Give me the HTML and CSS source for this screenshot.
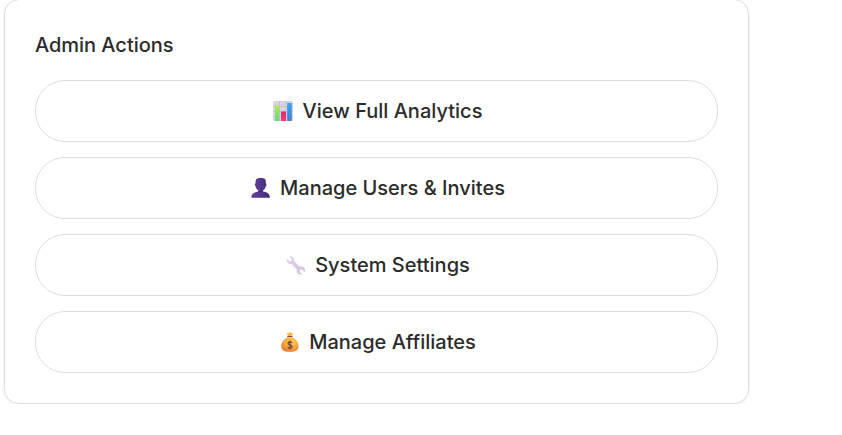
FILE: index.html
```html
<!DOCTYPE html>
<html lang="en">
<head>
<meta charset="utf-8">
<title>Admin Actions</title>
<link rel="stylesheet" href="styles.css">
</head>
<body>
<section class="card">
  <h2 class="card-title">Admin Actions</h2>
  <div class="actions">
    <button class="action" type="button">
      <svg class="icon" viewBox="0 0 20 20" aria-hidden="true">
        <defs>
          <linearGradient id="green" x2="0" y2="1"><stop stop-color="#b5e95b"/><stop offset="1" stop-color="#5bdc7c"/></linearGradient>
          <linearGradient id="pink" x2="0" y2="1"><stop stop-color="#d52b79"/><stop offset="1" stop-color="#fb3c70"/></linearGradient>
          <linearGradient id="blue" x2="0" y2="1"><stop stop-color="#31aaf3"/><stop offset="1" stop-color="#477bd0"/></linearGradient>
        </defs>
        <rect width="20" height="20" rx="1.8" fill="#d9d3e2"/>
        <path d="M0 5.5h20M0 10.5h20M0 15.5h20M6.5 0v20M13 0v20" stroke="#bdb5ca" stroke-width=".7"/>
        <path d="M2 4.2h4.300v15.800H2z" fill="url(#green)"/>
        <path d="M8 10.500h5v9.500H8z" fill="url(#pink)"/>
        <path d="M14.200 2h4.600v18h-4.600z" fill="url(#blue)"/>
      </svg>
      <span>View Full Analytics</span>
    </button>
    <button class="action" type="button">
      <svg class="icon" viewBox="-1 0 20 20" aria-hidden="true">
        <defs>
          <linearGradient id="bust"><stop stop-color="#60429a"/><stop offset=".6" stop-color="#50348a"/><stop offset="1" stop-color="#432b70"/></linearGradient>
        </defs>
        <path d="M4.600 3.100C4.800 1 6.400.1 8.600.1h2.400c2.300 0 3.600 1 3.800 3v2.200c.8.100.9 2.800-.1 3-.3 2-1.300 3.500-2.700 4.300v1c3.700.5 6.300 2.100 6.800 4.700v1.500H.4v-1.500c.6-2.600 3.100-4.200 7-4.700v-1C5.900 11.800 4.900 10.300 4.600 8.300c-1-.2-.9-2.900 0-3z" fill="url(#bust)"/>
        <path d="M7.400 12.600q2.400 1 4.600 0v1q-2.300 1-4.600 0z" fill="#3c2668"/>
      </svg>
      <span>Manage Users &amp; Invites</span>
    </button>
    <button class="action" type="button">
      <svg class="icon" viewBox="-1 0 20 20" aria-hidden="true">
        <defs>
          <linearGradient id="steel" x2="1" y2="1"><stop stop-color="#d8d3dc"/><stop offset=".5" stop-color="#dccdea"/><stop offset="1" stop-color="#cbc5d3"/></linearGradient>
        </defs>
        <path d="M3.200 1.300C6.300.7 8.800 3 8.100 6.100l5.400 5.400c3-.8 6 1.500 5.500 4.700l-.4 1-2.700-2.700-1.900.2-.4 2 2.700 2.500c-3.500 1.100-6.300-1.400-5.500-4.800L5.500 9C2.500 9.700.2 7.300.9 3.800l2.600 2.600 2-.5.3-1.900z" fill="url(#steel)"/>
        <path d="m6.800 7.500 6 6" fill="none" stroke="#c9b5dd" stroke-width=".6"/>
      </svg>
      <span>System Settings</span>
    </button>
    <button class="action" type="button">
      <svg class="icon" viewBox="-1 0 20 20" aria-hidden="true">
        <defs>
          <radialGradient id="sack" cx=".62" cy=".3" r=".72"><stop stop-color="#ffc950"/><stop offset=".6" stop-color="#f8a83b"/><stop offset="1" stop-color="#e57b35"/></radialGradient>
        </defs>
        <path d="M6.300 1.100q1.700 1 2.400-.4Q10 0 11 .8q1.300 1.200 2.500.3l-1.700 3H8z" fill="#fbb440"/>
        <path d="M7.700 5.300C3.500 7.400 1.200 10.600 1.200 14c0 4 2.400 5.800 8.700 5.800s8.700-1.800 8.700-5.800c0-3.400-2.400-6.600-6.700-8.700z" fill="url(#sack)"/>
        <path d="M7.700 4.500h4.500" stroke="#8d5145" stroke-width="1.200" stroke-linecap="round"/>
        <path d="M12 10.800C11.400 9.500 8 9.300 8 11.200c0 2 4.100 1.300 4.100 3.500 0 2-3.600 1.900-4.300.3M10 8.500v8.900" fill="none" stroke="#75433f" stroke-width="1.200"/>
      </svg>
      <span>Manage Affiliates</span>
    </button>
  </div>
</section>
</body>
</html>
```
FILE: styles.css
```css
* {
  box-sizing: border-box;
}

body {
  margin: 0;
  background: #fff;
  color: #2b2b2b;
  font-family: Inter, sans-serif;
  overflow: hidden;
}

.card {
  width: 745px;
  height: 405px;
  margin: -1px 0 0 4px;
  padding: 30px;
  border: 1px solid #dedede;
  border-radius: 15px;
  box-shadow: 0 1px 3px rgba(0, 0, 0, 0.08);
}

.card-title {
  margin: 0 0 20px;
  font-size: 20px;
  font-weight: 500;
  line-height: 30px;
  letter-spacing: -0.03px;
}

.actions {
  display: grid;
  gap: 15px;
}

.action {
  display: flex;
  align-items: center;
  justify-content: center;
  height: 62px;
  padding: 0;
  border: 1px solid #dedede;
  border-radius: 30px;
  background: #fff;
  color: inherit;
  font: 500 20px/30px Inter, sans-serif;
}

.icon {
  width: 20px;
  height: 20px;
  margin: 0 10px 0 2px;
  overflow: visible;
}
```
